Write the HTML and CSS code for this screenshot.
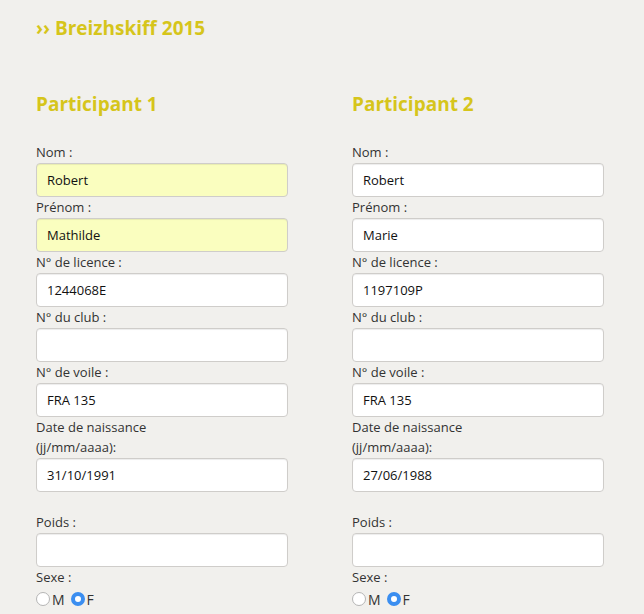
FILE: index.html
```html
<!DOCTYPE html>
<html lang="fr">
<head>
<meta charset="utf-8">
<title>Breizhskiff 2015</title>
<link rel="stylesheet" href="styles.css">
</head>
<body>
<div class="page">
  <h1 class="title">›› Breizhskiff 2015</h1>
  <div class="columns">
    <div class="col">
      <h2 class="col-title">Participant 1</h2>
      <label class="lbl">Nom :</label>
      <input class="inp autofill" type="text" value="Robert">
      <label class="lbl">Prénom :</label>
      <input class="inp autofill" type="text" value="Mathilde">
      <label class="lbl">N° de licence :</label>
      <input class="inp" type="text" value="1244068E">
      <label class="lbl">N° du club :</label>
      <input class="inp" type="text" value="">
      <label class="lbl">N° de voile :</label>
      <input class="inp" type="text" value="FRA 135">
      <label class="lbl">Date de naissance<br>(jj/mm/aaaa):</label>
      <input class="inp" type="text" value="31/10/1991">
      <label class="lbl spaced">Poids :</label>
      <input class="inp" type="text" value="">
      <label class="lbl">Sexe :</label>
      <div class="radios">
        <label class="radio"><input type="radio" name="s1">M</label>
        <label class="radio"><input type="radio" name="s1" checked>F</label>
      </div>
      <label class="lbl">Adresse :</label>
    </div>
    <div class="col">
      <h2 class="col-title">Participant 2</h2>
      <label class="lbl">Nom :</label>
      <input class="inp" type="text" value="Robert">
      <label class="lbl">Prénom :</label>
      <input class="inp" type="text" value="Marie">
      <label class="lbl">N° de licence :</label>
      <input class="inp" type="text" value="1197109P">
      <label class="lbl">N° du club :</label>
      <input class="inp" type="text" value="">
      <label class="lbl">N° de voile :</label>
      <input class="inp" type="text" value="FRA 135">
      <label class="lbl">Date de naissance<br>(jj/mm/aaaa):</label>
      <input class="inp" type="text" value="27/06/1988">
      <label class="lbl spaced">Poids :</label>
      <input class="inp" type="text" value="">
      <label class="lbl">Sexe :</label>
      <div class="radios">
        <label class="radio"><input type="radio" name="s2">M</label>
        <label class="radio"><input type="radio" name="s2" checked>F</label>
      </div>
      <label class="lbl">Adresse :</label>
    </div>
  </div>
</div>
</body>
</html>
```

FILE: styles.css
```css
html, body {
  margin: 0;
  padding: 0;
  background: #f1f0ed;
  font-family: "Open Sans", "Liberation Sans", sans-serif;
  color: #333;
}
.page {
  padding: 18px 0 0 36px;
}
.title {
  margin: 0 0 56px;
  font-size: 19px;
  line-height: 20px;
  font-weight: 700;
  color: #d6c51b;
}
.columns {
  display: flex;
  gap: 64px;
}
.col {
  width: 252px;
  display: flex;
  flex-direction: column;
}
.col-title {
  margin: 0 0 28px;
  font-size: 19px;
  line-height: 20px;
  font-weight: 700;
  color: #d6c51b;
}
.lbl {
  display: block;
  font-size: 13px;
  line-height: 20px;
  margin-bottom: 1px;
}
.lbl.spaced {
  margin-top: 20px;
}
.inp {
  box-sizing: border-box;
  width: 252px;
  height: 34px;
  margin: 0;
  padding: 0 10px;
  border: 1px solid #cfcdca;
  border-radius: 4px;
  background: #fff;
  box-shadow: inset 0 1px 1px rgba(0,0,0,0.075);
  font-family: "Open Sans", "Liberation Sans", sans-serif;
  font-size: 13px;
  color: #111;
}
.inp.autofill {
  background: #fafebf;
}
.radios {
  display: flex;
  gap: 6px;
  height: 22px;
  align-items: center;
}
.radio {
  display: flex;
  align-items: center;
  font-size: 14px;
  color: #333;
}
.radio input {
  -webkit-appearance: none;
  appearance: none;
  box-sizing: border-box;
  width: 14px;
  height: 14px;
  margin: 0 2px 0 0;
  border: 1px solid #b5b5b5;
  border-radius: 50%;
  background: #fff;
}
.radio input:checked {
  border: 4.5px solid #3b8ef0;
  background: #fff;
}
```
